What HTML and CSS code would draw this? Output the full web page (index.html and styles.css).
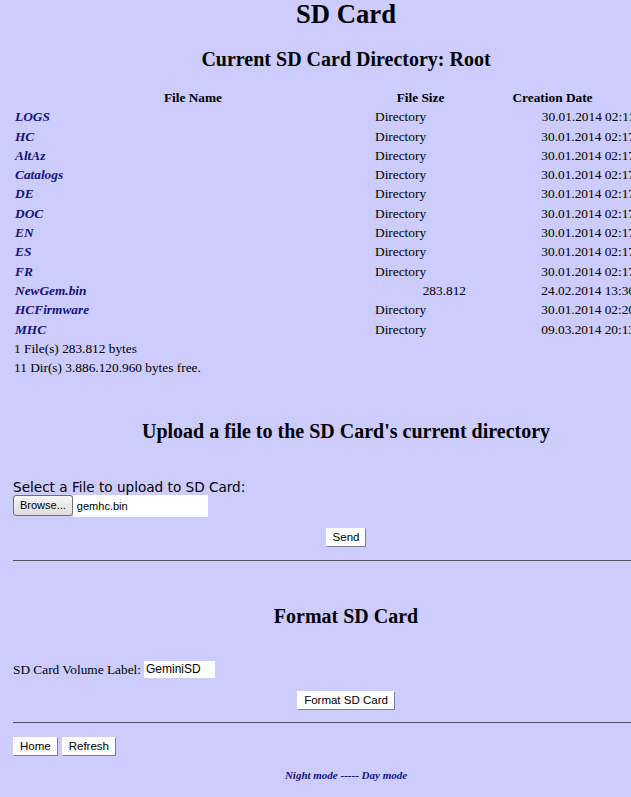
FILE: index.html
```html
<!DOCTYPE html>
<html>
<head>
<meta charset="utf-8">
<title>SD Card</title>
<link rel="stylesheet" href="styles.css">
</head>
<body>
<div class="page">
  <h1 class="title">SD Card</h1>
  <h2 class="section-title dir-title">Current SD Card Directory: Root</h2>
  <table class="files">
    <colgroup>
      <col class="c-name"><col class="c-size"><col class="c-date"><col class="c-rest">
    </colgroup>
    <thead>
      <tr><th>File Name</th><th>File Size</th><th>Creation Date</th><th></th></tr>
    </thead>
    <tbody>
      <tr><td><a href="#">LOGS</a></td><td>Directory</td><td class="date">30.01.2014 02:11</td><td></td></tr>
      <tr><td><a href="#">HC</a></td><td>Directory</td><td class="date">30.01.2014 02:17</td><td></td></tr>
      <tr><td><a href="#">AltAz</a></td><td>Directory</td><td class="date">30.01.2014 02:17</td><td></td></tr>
      <tr><td><a href="#">Catalogs</a></td><td>Directory</td><td class="date">30.01.2014 02:17</td><td></td></tr>
      <tr><td><a href="#">DE</a></td><td>Directory</td><td class="date">30.01.2014 02:17</td><td></td></tr>
      <tr><td><a href="#">DOC</a></td><td>Directory</td><td class="date">30.01.2014 02:17</td><td></td></tr>
      <tr><td><a href="#">EN</a></td><td>Directory</td><td class="date">30.01.2014 02:17</td><td></td></tr>
      <tr><td><a href="#">ES</a></td><td>Directory</td><td class="date">30.01.2014 02:17</td><td></td></tr>
      <tr><td><a href="#">FR</a></td><td>Directory</td><td class="date">30.01.2014 02:17</td><td></td></tr>
      <tr><td><a href="#">NewGem.bin</a></td><td class="num">283.812</td><td class="date">24.02.2014 13:36</td><td></td></tr>
      <tr><td><a href="#">HCFirmware</a></td><td>Directory</td><td class="date">30.01.2014 02:20</td><td></td></tr>
      <tr><td><a href="#">MHC</a></td><td>Directory</td><td class="date">09.03.2014 20:13</td><td></td></tr>
      <tr><td colspan="4" class="summary">1 File(s) 283.812 bytes</td></tr>
      <tr><td colspan="4" class="summary">11 Dir(s) 3.886.120.960 bytes free.</td></tr>
    </tbody>
  </table>

  <h2 class="section-title upload-title">Upload a file to the SD Card's current directory</h2>
  <form class="upload" onsubmit="return false">
    <div class="upload-label">Select a File to upload to SD Card:</div>
    <div class="file-picker">
      <span class="btn browse">Browse...</span><span class="file-name">gemhc.bin</span>
    </div>
    <div class="center-row send-row"><button class="btn" type="button">Send</button></div>
  </form>
  <hr class="rule upload-rule">

  <h2 class="section-title format-title">Format SD Card</h2>
  <div class="volume-row">SD Card Volume Label: <span class="text-input">GeminiSD</span></div>
  <div class="center-row format-row"><button class="btn" type="button">Format SD Card</button></div>
  <hr class="rule">

  <div class="nav-row">
    <button class="btn" type="button">Home</button>
    <button class="btn" type="button">Refresh</button>
  </div>
  <div class="mode-row"><a href="#">Night mode</a> ----- <a href="#">Day mode</a></div>
</div>
</body>
</html>
```

FILE: styles.css
```css
html, body {
  margin: 0;
  padding: 0;
  background: #ccccff;
}
body {
  font-family: "Liberation Serif", "Times New Roman", serif;
  color: #000;
  font-size: 13.33px;
}
.page {
  width: 666px;
  padding: 0 13px;
}
a {
  color: #14147a;
  font-weight: bold;
  font-style: italic;
  text-decoration: none;
}
.title {
  margin: 0;
  padding-top: 0;
  font-size: 26.67px;
  text-align: center;
  line-height: 28px;
}
.section-title {
  font-size: 20px;
  text-align: center;
  margin: 0;
  line-height: 23px;
}
.dir-title { margin-top: 20px; }
.files {
  width: 666px;
  border-spacing: 0 2px;
  margin-top: 16px;
  table-layout: fixed;
  font-size: 13.33px;
}
.c-name { width: 360px; }
.c-size { width: 95px; }
.c-date { width: 169px; }
.files th, .files td {
  padding: 1px 2px;
  line-height: 15.3px;
  white-space: nowrap;
  text-align: left;
}
.files th { text-align: center; }
.files td.num { text-align: right; }
.files td.date { text-align: right; }
.files td.summary { padding-left: 1px; }
.upload-title { margin-top: 42px; }
.upload {
  margin-top: 37px;
}
.upload-label {
  font-family: "DejaVu Sans", Verdana, sans-serif;
  font-size: 13.6px;
  line-height: 15px;
}
.file-picker {
  display: flex;
  align-items: stretch;
  height: 22px;
}
.btn {
  font-family: "Liberation Sans", Arial, sans-serif;
  font-size: 11.5px;
  background: #fff;
  color: #000;
  border: 1px solid #fff;
  border-right-color: #808080;
  border-bottom-color: #808080;
  padding: 0 6px;
  height: 19px;
  line-height: 17px;
  cursor: pointer;
}
.browse {
  display: inline-flex;
  align-items: center;
  height: 21px;
  box-sizing: border-box;
  background: linear-gradient(#f6f6f6, #dcdcdc);
  border: 1px solid #707070;
  border-radius: 3px;
  padding: 0 6px;
  font-size: 11px;
}
.file-name {
  background: #fff;
  width: 135px;
  font-family: "Liberation Sans", Arial, sans-serif;
  font-size: 11px;
  display: flex;
  align-items: center;
  padding-left: 4px;
  box-sizing: border-box;
}
.center-row {
  display: flex;
  justify-content: center;
  margin-top: 13px;
}
.send-row { margin-top: 11px; }
.rule {
  border: 0;
  border-top: 1px solid #555;
  margin: 12px 0 0;
  height: 0;
}
.upload-rule { margin-top: 13px; }
.format-title { margin-top: 44px; }
.volume-row {
  margin-top: 33px;
  display: flex;
  align-items: center;
  gap: 3px;
}
.text-input {
  background: #fff;
  font-family: "Liberation Sans", Arial, sans-serif;
  font-size: 12px;
  width: 71px;
  height: 17px;
  line-height: 17px;
  padding-left: 2px;
  box-sizing: border-box;
}
.format-row { margin-top: 13px; }
.nav-row {
  display: flex;
  gap: 4px;
  margin-top: 14px;
}
.mode-row {
  text-align: center;
  margin-top: 13px;
  font-size: 11px;
  font-weight: bold;
  font-style: italic;
  color: #14147a;
}
```
